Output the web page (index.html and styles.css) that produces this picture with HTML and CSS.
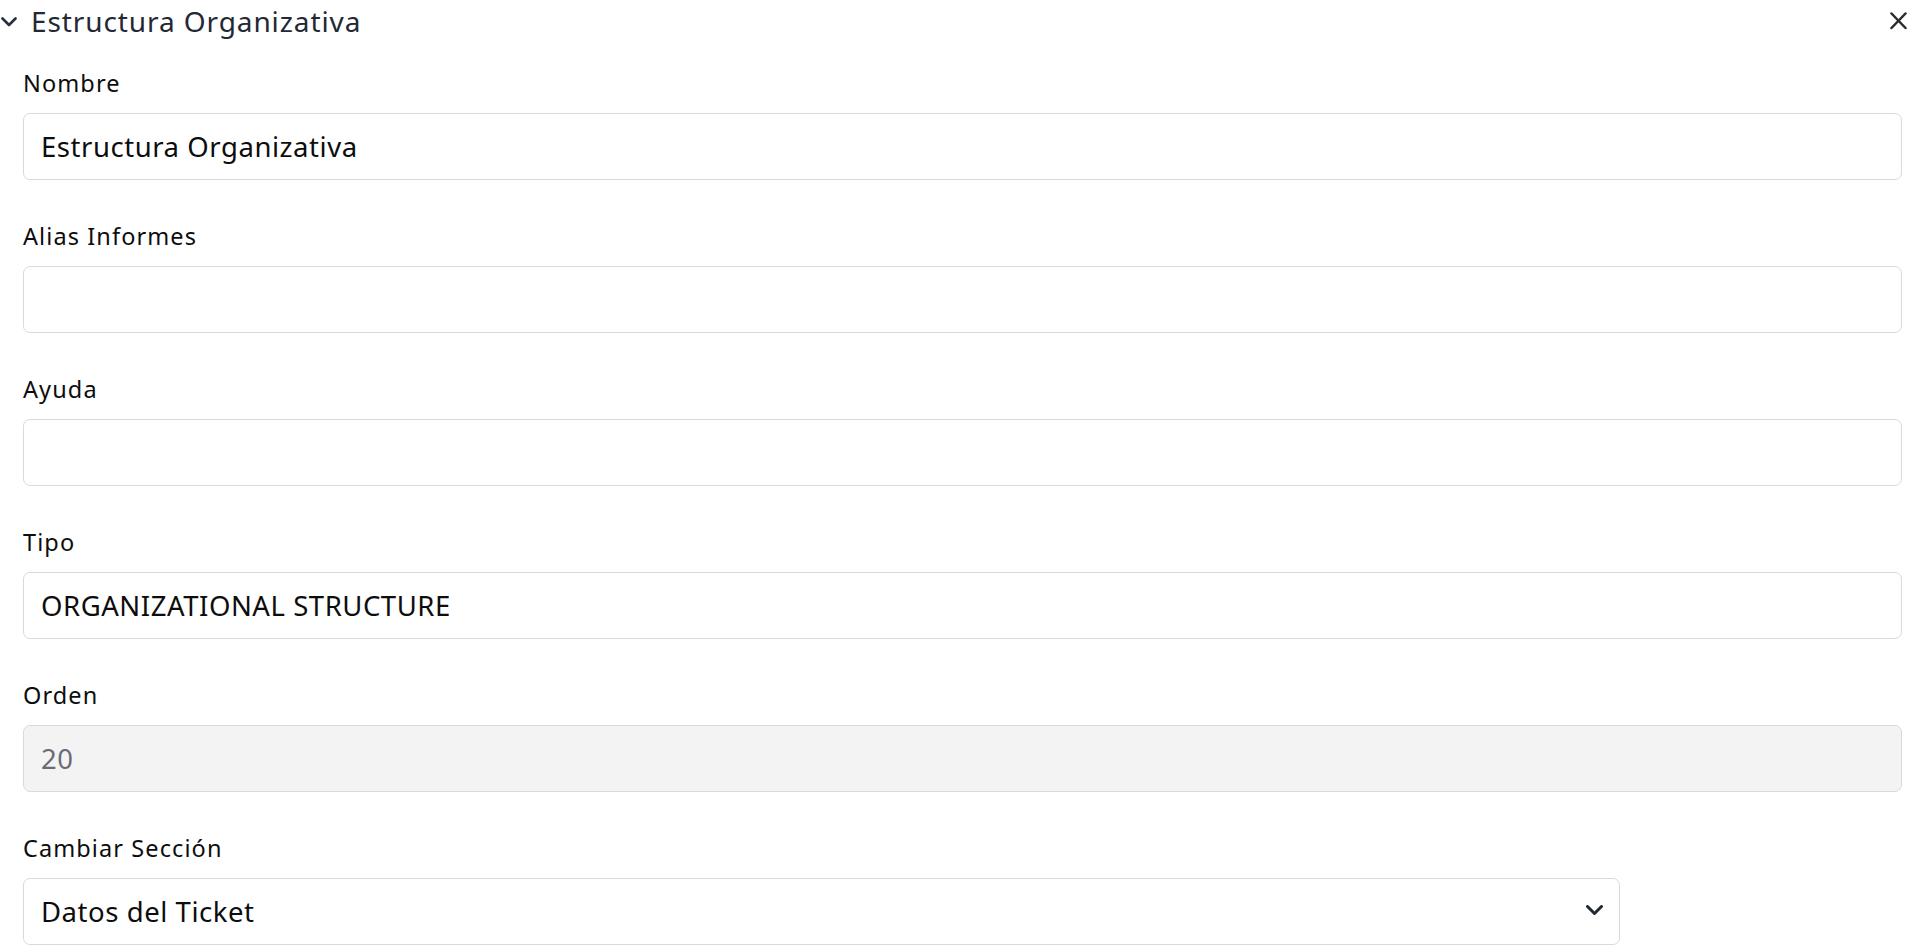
FILE: index.html
```html
<!DOCTYPE html>
<html lang="es">
<head>
<meta charset="utf-8">
<title>Estructura Organizativa</title>
<link rel="stylesheet" href="styles.css">
</head>
<body>
<div class="panel">
  <div class="panel-header">
    <div class="header-left">
      <svg class="chev" width="16" height="12" viewBox="0 0 16 12"><path d="M1.5 2.5 L8 9 L14.5 2.5" fill="none" stroke="#253041" stroke-width="2.6" stroke-linecap="round" stroke-linejoin="round"/></svg>
      <span class="panel-title">Estructura Organizativa</span>
    </div>
    <svg class="close" width="17" height="18" viewBox="0 0 17 18"><path d="M1.5 1.5 L15.5 16 M15.5 1.5 L1.5 16" fill="none" stroke="#2a2a2a" stroke-width="2.5" stroke-linecap="round"/></svg>
  </div>
  <form class="form">
    <div class="field">
      <label class="label">Nombre</label>
      <input class="input" type="text" value="Estructura Organizativa">
    </div>
    <div class="field">
      <label class="label">Alias Informes</label>
      <input class="input" type="text" value="">
    </div>
    <div class="field">
      <label class="label">Ayuda</label>
      <input class="input" type="text" value="">
    </div>
    <div class="field">
      <label class="label">Tipo</label>
      <input class="input" type="text" value="ORGANIZATIONAL STRUCTURE">
    </div>
    <div class="field">
      <label class="label">Orden</label>
      <input class="input input-disabled" type="text" value="20" disabled>
    </div>
    <div class="field">
      <label class="label">Cambiar Sección</label>
      <div class="select">
        <span class="select-value">Datos del Ticket</span>
        <svg class="select-chev" width="17" height="11" viewBox="0 0 17 11"><path d="M1.5 1.5 L8.5 8.5 L15.5 1.5" fill="none" stroke="#1f2937" stroke-width="3" stroke-linecap="round" stroke-linejoin="round"/></svg>
      </div>
    </div>
  </form>
</div>
</body>
</html>
```
FILE: styles.css
```css
* { box-sizing: border-box; }
html, body { margin: 0; padding: 0; background: #ffffff; }
body {
  font-family: "Noto Sans", "Open Sans", sans-serif;
  color: #111111;
  overflow: hidden;
}
.panel { width: 1910px; }
.panel-header {
  height: 42px;
  display: flex;
  align-items: center;
  justify-content: space-between;
  padding: 0 3px 0 1px;
}
.header-left { display: flex; align-items: center; }
.chev { margin-right: 14px; margin-top: 1px; }
.panel-title {
  font-size: 28px;
  line-height: 42px;
  color: #232834;
  letter-spacing: 0.9px;
}
.close { margin-top: 0; }
.form {
  padding: 24px 8px 0 23px;
  display: flex;
  flex-direction: column;
  gap: 39px;
}
.field { display: flex; flex-direction: column; }
.label {
  font-size: 23.5px;
  line-height: 34px;
  margin-bottom: 13px;
  color: #0d0d0d;
  letter-spacing: 1.1px;
}
.input {
  height: 67px;
  width: 100%;
  border: 1px solid #d5dcdc;
  border-radius: 7px;
  padding: 0 17px;
  font-family: inherit;
  font-size: 27.5px;
  color: #0d0d0d;
  background: #ffffff;
  outline: none;
  letter-spacing: 0.55px;
}
.input-disabled {
  background: #f3f3f4;
  color: #6b6b78;
  -webkit-text-fill-color: #6b6b78;
  opacity: 1;
}
.select {
  height: 67px;
  width: 1597px;
  border: 1px solid #d5dcdc;
  border-radius: 7px;
  padding: 0 16px 0 17px;
  display: flex;
  align-items: center;
  justify-content: space-between;
  font-size: 27.5px;
  color: #0d0d0d;
  letter-spacing: 0.55px;
}
.select-chev { margin-top: -3px; }
```
